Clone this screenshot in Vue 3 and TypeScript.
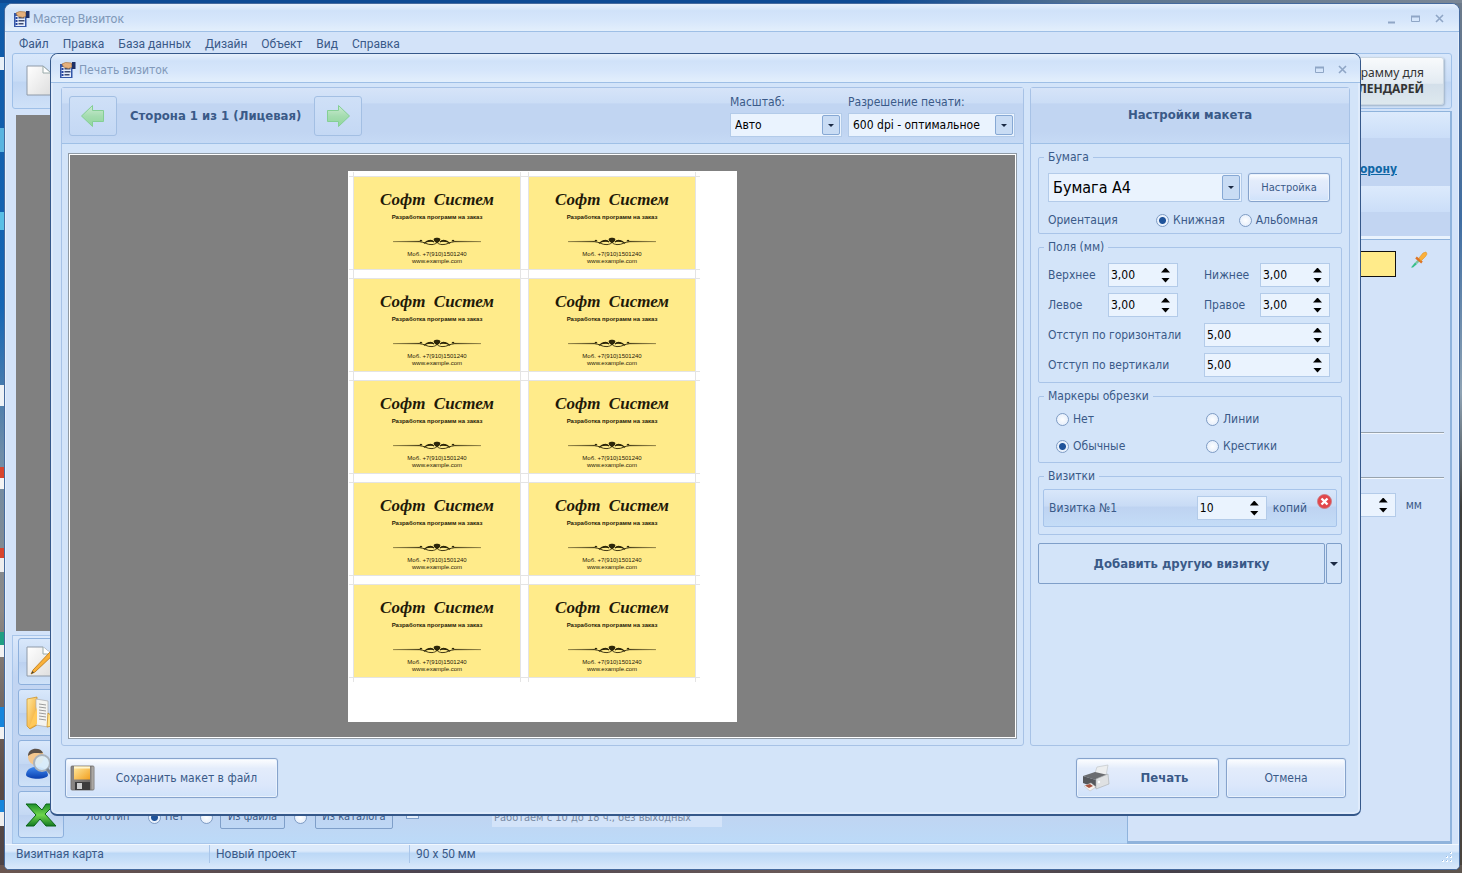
<script setup lang="ts">
import { ref } from 'vue'

interface Marker { id: string; label: string }

const menu: string[] = ['Файл', 'Правка', 'База данных', 'Дизайн', 'Объект', 'Вид', 'Справка']
const markers: Marker[] = [
  { id: 'none', label: 'Нет' },
  { id: 'lines', label: 'Линии' },
  { id: 'plain', label: 'Обычные' },
  { id: 'cross', label: 'Крестики' },
]
const scale = ref('Авто')
const dpi = ref('600 dpi - оптимальное')
const paper = ref('Бумага А4')
const orientation = ref('portrait')
const marker = ref('plain')
const logo = ref('none')
const copies = ref('10')
const top = ref('3,00')
const bottom = ref('3,00')
const left = ref('3,00')
const right = ref('3,00')
const gapX = ref('5,00')
const gapY = ref('5,00')
const side = ref('')
const hours = ref('Работаем с 10 до 18 ч., без выходных')
</script>

<template>
  <div class="desktop">
    <svg width="0" height="0" class="defs" aria-hidden="true">
      <defs>
        <linearGradient id="gGreen" x1="0" y1="0" x2="0" y2="1">
          <stop offset="0" stop-color="#cdebd3" /><stop offset="0.5" stop-color="#a5dcb0" /><stop offset="1" stop-color="#8fd79b" />
        </linearGradient>
        <linearGradient id="gPage" x1="0" y1="0" x2="1" y2="1">
          <stop offset="0" stop-color="#ffffff" /><stop offset="1" stop-color="#dedede" />
        </linearGradient>
        <linearGradient id="gGold" x1="0" y1="0" x2="1" y2="1">
          <stop offset="0" stop-color="#ffe9a0" /><stop offset="1" stop-color="#f2a020" />
        </linearGradient>
        <linearGradient id="gSteel" x1="0" y1="0" x2="1" y2="0">
          <stop offset="0" stop-color="#8d8986" /><stop offset="0.8" stop-color="#6c6865" /><stop offset="1" stop-color="#c9c6c2" />
        </linearGradient>
        <linearGradient id="gXl" x1="0" y1="0" x2="0" y2="1">
          <stop offset="0" stop-color="#1f8f2c" /><stop offset="0.5" stop-color="#6fd64c" /><stop offset="1" stop-color="#157a22" />
        </linearGradient>
        <linearGradient id="gMan" x1="0" y1="0" x2="0" y2="1">
          <stop offset="0" stop-color="#3f8af0" /><stop offset="1" stop-color="#0a3fae" />
        </linearGradient>
        <symbol id="appIcon" viewBox="0 0 16 16">
          <rect x="0.500" y="2" width="12.500" height="14" fill="#3457a8" />
          <rect x="2" y="5" width="9.500" height="10" fill="#e6eefc" />
          <rect x="2" y="6" width="2" height="2" fill="#2443a0" /><rect x="5" y="6" width="6" height="1.500" fill="#3c4a70" />
          <rect x="2" y="9" width="2" height="2" fill="#2443a0" /><rect x="5" y="9" width="6" height="1.500" fill="#3c4a70" />
          <rect x="2" y="12" width="2" height="2" fill="#2443a0" /><rect x="5" y="12" width="5" height="1.500" fill="#3c4a70" />
          <path d="M2.500 2 L6 0.500 L12 1 L12.500 5 L9 6.500 L4 5 Z" fill="#e5b07c" stroke="#a8743f" stroke-width="0.7" />
          <rect x="12.500" y="0" width="3.500" height="7" fill="#1c2f66" />
        </symbol>
        <symbol id="ornament" viewBox="0 0 88 10">
          <path d="M0 4.6 L26 4.2 L26 5 Z M88 4.6 L62 4.2 L62 5 Z" fill="#2c2609" stroke="#2c2609" stroke-width="0.3" />
          <path d="M26 4.6 C32 5 34 8 39 7.6 C43 7.2 44 5.4 44 5.4 C44 5.4 45 7.2 49 7.6 C54 8 56 5 62 4.6" fill="none" stroke="#2c2609" stroke-width="0.9" />
          <path d="M29 4.2 C28 2.6 26.6 3.6 27.4 4.6 M59 4.2 C60 2.6 61.4 3.6 60.6 4.6 M31 6.4 C34 3.6 37 2.4 41 5 M57 6.4 C54 3.6 51 2.4 47 5" fill="none" stroke="#2c2609" stroke-width="1.1" />
          <path d="M33 5.2 C36 1.8 39 2 41 5 C38 4.4 36 4.6 33 5.2 Z M55 5.2 C52 1.8 49 2 47 5 C50 4.4 52 4.6 55 5.2 Z" fill="#2c2609" />
          <path d="M44 6.200 C41 5 40 2.600 41 1.6 C42 0.6 46 0.6 47 1.6 C48 2.6 47 5 44 6.200 Z" fill="#2c2609" />
        </symbol>
      </defs>
    </svg>

    <div class="app">
      <header class="titlebar">
        <svg class="ico16"><use href="#appIcon" /></svg>
        <span class="title">Мастер Визиток</span>
        <div class="winbtns">
          <button type="button" aria-label="Свернуть"><svg width="10" height="10"><path d="M1 8.5H8" stroke="#8fa6c6" stroke-width="2" /></svg></button>
          <button type="button" aria-label="Развернуть"><svg width="10" height="10"><path d="M0.5 3V7.500H8.500V3" fill="none" stroke="#8fa6c6" /><path d="M0 2.500H9" stroke="#8fa6c6" stroke-width="2" /></svg></button>
          <button type="button" aria-label="Закрыть"><svg width="10" height="10"><path d="M1 1L8 8M8 1L1 8" stroke="#8fa6c6" stroke-width="1.600" /></svg></button>
        </div>
      </header>
      <nav class="menu">
        <a v-for="m in menu" :key="m" href="#">{{ m }}</a>
      </nav>
      <div class="toolbar">
        <svg width="28" height="32" viewBox="0 0 28 32"><path d="M1 1H17L25 8V30H1Z" fill="url(#gPage)" stroke="#8f9aa8" /><path d="M17 1V8H25Z" fill="#fff" stroke="#9aa" /></svg>
        <button type="button" class="promo"><span>Скачать программу для</span><b>КАЛЕНДАРЕЙ</b></button>
      </div>
      <div class="body">
        <section class="work">
          <div class="canvas"></div>
          <div class="tools">
            <div class="toolcol">
              <button type="button" aria-label="Изменить">
                <svg width="30" height="34" viewBox="0 0 30 34"><path d="M2 2H18L27 9V31H2Z" fill="url(#gPage)" stroke="#8f9aa8" /><path d="M18 2V9H27" fill="#fff" stroke="#9aa" /><path d="M6 29L8 25L25 7L28 10L10 27Z" fill="#fab13a" stroke="#b87410" stroke-width="0.8" /><path d="M6 29L7.500 26L9 27.500Z" fill="#443" /></svg>
              </button>
              <button type="button" aria-label="Папка">
                <svg width="30" height="34" viewBox="0 0 30 34"><path d="M2 3L12 1V29L5 33L2 30Z" fill="url(#gGold)" stroke="#c98d20" stroke-width="0.7" /><path d="M11 3L23 5V31L11 29Z" fill="#f4f4f1" stroke="#aaa" stroke-width="0.7" /><path d="M14 8L21 9M14 11L21 12M14 14L21 15M14 17L21 18M14 20L21 21M14 23L21 24" stroke="#9b9b9b" stroke-width="1" /><path d="M4 32L12 11V28Z" fill="#ffc95a" /><path d="M23 17L27 20V30L22 31Z" fill="#ffe28a" stroke="#c98d20" stroke-width="0.7" /></svg>
              </button>
              <button type="button" aria-label="Поиск">
                <svg width="30" height="34" viewBox="0 0 30 34"><circle cx="11" cy="10" r="8" fill="#f3c78f" /><path d="M3 9C3 0 16 0 18 6C13 7 9 4 3 9Z" fill="#5b5149" /><path d="M1 28C1 17 22 17 23 28C22 33 3 33 1 28Z" fill="url(#gMan)" /><circle cx="17" cy="16" r="8" fill="#dceefb" fill-opacity="0.9" stroke="#a9b3bd" stroke-width="2" /><path d="M22 22L28 29" stroke="#7d8790" stroke-width="3" /></svg>
              </button>
              <button type="button" aria-label="Excel">
                <svg width="32" height="26" viewBox="0 0 32 26"><path d="M1 2H11L17 8L21 2H30L20 12L31 24H21L15 17L9 24H1L11 13Z" fill="url(#gXl)" stroke="#0b6418" /></svg>
              </button>
            </div>
            <div class="logorow">
              <span class="lbl">Логотип</span>
              <label class="radio r1"><input v-model="logo" type="radio" name="logo" value="none" />Нет</label>
              <input v-model="logo" class="r2" type="radio" name="logo" value="file" aria-label="Из файла" />
              <button type="button" class="flat b1">Из файла</button>
              <input v-model="logo" class="r3" type="radio" name="logo" value="catalog" aria-label="Из каталога" />
              <button type="button" class="flat b2">Из каталога</button>
              <label class="check"><input type="checkbox" />Время</label>
              <input v-model="hours" class="hours" type="text" aria-label="Часы работы" />
            </div>
          </div>
        </section>
        <aside class="side">
          <div class="sidehead h1"><a href="#">Добавить сторону</a></div>
          <div class="sidehead h2"></div>
          <div class="sidebody">
            <div class="color">
              <button type="button" class="swatch" aria-label="Цвет фона"></button>
              <svg width="18" height="18" viewBox="0 0 18 18"><path d="M1 16.500L5 11.500L7 13L3 16.500Z" fill="#36c08a" /><path d="M5 11.500L8 8.500L10 10L7 13Z" fill="#7fc4a0" /><path d="M6 6.500L12 11.500" stroke="#dd7426" stroke-width="2.400" /><path d="M9 7L13 2L16 1L17 3L15.500 5.500L11 10Z" fill="#fbb03a" stroke="#e09326" stroke-width="0.600" /></svg>
            </div>
            <hr class="hr1" />
            <hr class="hr2" />
            <div class="size">
              <span class="spin"><input v-model="side" type="text" aria-label="Размер" /><span class="ud"><button type="button" aria-label="Больше"></button><button type="button" class="dn" aria-label="Меньше"></button></span></span>
              <span>мм</span>
            </div>
          </div>
        </aside>
      </div>
      <footer class="status">
        <span>Визитная карта</span><span>Новый проект</span><span>90 x 50 мм</span>
        <svg width="12" height="12" viewBox="0 0 12 12"><path d="M9 1h2v2H9zM5 5h2v2H5zM9 5h2v2H9zM1 9h2v2H1zM5 9h2v2H5zM9 9h2v2H9z" fill="#fff" /><path d="M9 1h1v1H9zM5 5h1v1H5zM9 5h1v1H9zM1 9h1v1H1zM5 9h1v1H5zM9 9h1v1H9z" fill="#8fb3dd" /></svg>
      </footer>
    </div>

    <div class="dialog" role="dialog" aria-label="Печать визиток">
      <header class="titlebar">
        <svg class="ico16"><use href="#appIcon" /></svg>
        <span class="title">Печать визиток</span>
        <div class="winbtns">
          <button type="button" aria-label="Развернуть"><svg width="10" height="10"><path d="M0.5 3V7.500H8.500V3" fill="none" stroke="#8fa6c6" /><path d="M0 2.500H9" stroke="#8fa6c6" stroke-width="2" /></svg></button>
          <button type="button" aria-label="Закрыть"><svg width="10" height="10"><path d="M1 1L8 8M8 1L1 8" stroke="#8fa6c6" stroke-width="1.600" /></svg></button>
        </div>
      </header>
      <div class="main">
        <section class="panel view">
          <div class="head bar">
            <button type="button" class="nav" aria-label="Назад"><svg width="26" height="24" viewBox="0 0 26 24"><path d="M1.500 12L12.500 1.500V6.500H23.500V17.500H12.500V22.500Z" fill="url(#gGreen)" stroke="#84cf95" /></svg></button>
            <strong class="pagename">Сторона 1 из 1 (Лицевая)</strong>
            <button type="button" class="nav" aria-label="Вперёд"><svg width="26" height="24" viewBox="0 0 26 24"><path d="M24.500 12L13.500 1.500V6.500H2.500V17.500H13.500V22.500Z" fill="url(#gGreen)" stroke="#84cf95" /></svg></button>
            <label class="field scale">Масштаб:
              <span class="combo"><select v-model="scale"><option>Авто</option></select><i></i></span>
            </label>
            <label class="field dpi">Разрешение печати:
              <span class="combo"><select v-model="dpi"><option>600 dpi - оптимальное</option></select><i></i></span>
            </label>
          </div>
          <div class="preview">
            <div class="sheet">
              <div v-for="n in 10" :key="n" class="card">
                <div class="name">Софт&nbsp; Систем</div>
                <div class="slogan">Разработка программ на заказ</div>
                <svg width="88" height="10"><use href="#ornament" /></svg>
                <div class="contact">Моб. +7(910)1501240<br />www.example.com</div>
              </div>
            </div>
          </div>
        </section>

        <aside class="panel settings">
          <div class="head sethead">Настройки макета</div>
          <form class="groups" @submit.prevent>
            <fieldset class="paper">
              <legend>Бумага</legend>
              <div class="row">
                <span class="combo big"><select v-model="paper" aria-label="Бумага"><option>Бумага А4</option></select><i></i></span>
                <button type="button" class="btn setup">Настройка</button>
              </div>
              <div class="orient">
                <span>Ориентация</span>
                <label class="radio"><input v-model="orientation" type="radio" name="orient" value="portrait" />Книжная</label>
                <label class="radio"><input v-model="orientation" type="radio" name="orient" value="landscape" />Альбомная</label>
              </div>
            </fieldset>

            <fieldset class="margins">
              <legend>Поля (мм)</legend>
              <div class="mgrid">
                <label for="mTop">Верхнее</label>
                <span class="spin"><input id="mTop" v-model="top" type="text" /><span class="ud"><button type="button" aria-label="Больше"></button><button type="button" class="dn" aria-label="Меньше"></button></span></span>
                <label for="mBottom" class="c4">Нижнее</label>
                <span class="spin"><input id="mBottom" v-model="bottom" type="text" /><span class="ud"><button type="button" aria-label="Больше"></button><button type="button" class="dn" aria-label="Меньше"></button></span></span>
                <label for="mLeft">Левое</label>
                <span class="spin"><input id="mLeft" v-model="left" type="text" /><span class="ud"><button type="button" aria-label="Больше"></button><button type="button" class="dn" aria-label="Меньше"></button></span></span>
                <label for="mRight" class="c4">Правое</label>
                <span class="spin"><input id="mRight" v-model="right" type="text" /><span class="ud"><button type="button" aria-label="Больше"></button><button type="button" class="dn" aria-label="Меньше"></button></span></span>
                <label for="gX" class="wide">Отступ по горизонтали</label>
                <span class="spin long"><input id="gX" v-model="gapX" type="text" /><span class="ud"><button type="button" aria-label="Больше"></button><button type="button" class="dn" aria-label="Меньше"></button></span></span>
                <label for="gY" class="wide">Отступ по вертикали</label>
                <span class="spin long"><input id="gY" v-model="gapY" type="text" /><span class="ud"><button type="button" aria-label="Больше"></button><button type="button" class="dn" aria-label="Меньше"></button></span></span>
              </div>
            </fieldset>

            <fieldset class="marks">
              <legend>Маркеры обрезки</legend>
              <div class="kgrid">
                <label v-for="k in markers" :key="k.id" class="radio"><input v-model="marker" type="radio" name="marker" :value="k.id" />{{ k.label }}</label>
              </div>
            </fieldset>

            <fieldset class="cards">
              <legend>Визитки</legend>
              <div class="item">
                <label for="copies">Визитка №1</label>
                <span class="spin"><input id="copies" v-model="copies" type="text" /><span class="ud"><button type="button" aria-label="Больше"></button><button type="button" class="dn" aria-label="Меньше"></button></span></span>
                <span class="unit">копий</span>
                <button type="button" class="del" aria-label="Удалить"><svg width="15" height="15" viewBox="0 0 15 15"><circle cx="7.500" cy="7.500" r="7" fill="#e2474b" stroke="#c9797f" stroke-width="0.8" /><path d="M4.500 4.500L10.500 10.500M10.500 4.500L4.500 10.500" stroke="#fff" stroke-width="2.400" /></svg></button>
              </div>
            </fieldset>

            <div class="add">
              <button type="button" class="flat addmain">Добавить другую визитку</button>
              <button type="button" class="flat addmore" aria-label="Ещё"><i></i></button>
            </div>
          </form>
        </aside>
      </div>
      <footer class="actions">
        <button type="button" class="btn save">
          <svg width="26" height="26" viewBox="0 0 26 26"><rect x="1" y="1" width="23" height="24" rx="1" fill="url(#gSteel)" stroke="#6d6a67" stroke-width="0.8" /><rect x="4" y="1.500" width="16" height="13" fill="url(#gGold)" /><rect x="4" y="1.500" width="16" height="2" fill="#fff6cf" /><rect x="5" y="17" width="15" height="8" fill="#3d3c3c" /><rect x="7" y="18" width="5" height="6" fill="#cfcfcf" /></svg>
          <span>Сохранить макет в файл</span>
        </button>
        <button type="button" class="btn print">
          <svg width="30" height="28" viewBox="0 0 30 28"><path d="M16 3L27 1L25 12L13 12Z" fill="#eceeef" stroke="#c3c7ca" stroke-width="0.7" /><path d="M2 12L14 8L27 11L15 16Z" fill="#6a6c70" /><path d="M2 12L15 16V24L2 19Z" fill="#56585c" /><path d="M15 15L27 10L28 20L15 25Z" fill="#dfe1e3" stroke="#a8acaf" stroke-width="0.6" /><path d="M3 22L10 19L15 23L9 27Z" fill="#f6f2ef" stroke="#b9b9b9" stroke-width="0.5" /><path d="M4 21.500L9 20L12 22L8 24Z" fill="#a8533e" /><circle cx="18" cy="18" r="1.200" fill="#fff" /></svg>
          <b>Печать</b>
        </button>
        <button type="button" class="btn cancel">Отмена</button>
      </footer>
    </div>
  </div>
</template>

<style>
html, body { margin: 0; height: 100%; overflow: hidden; }
</style>

<style scoped>
* { box-sizing: border-box; }
.desktop {
  position: relative;
  min-height: 100vh;
  display: flex;
  padding: 3px 2px 3px 4px;
  font: 12px/16px "DejaVu Sans Condensed", "DejaVu Sans", sans-serif;
  color: #3a5a88;
  background:
    linear-gradient(90deg, #0d4a94 0 60%, #5b7590 75%, #7b8795) 0 0 / 100% 3px no-repeat,
    linear-gradient(90deg, #6a5650, #4c4450 30%, #6a5a58 55%, #45404a 80%, #5d554f) 0 100% / 100% 8px no-repeat,
    linear-gradient(transparent 57px, #e8f0f8 57px 70px, transparent 70px 128px, #5ab4e0 128px 152px, transparent 152px 212px, #59bfe6 212px 230px, transparent 230px 385px, #eef2f6 385px 406px, transparent 406px 467px, #d8452e 467px 478px, #f4f4f4 478px 489px, transparent 489px 548px, #d8452e 548px 558px, #eee 558px 572px, transparent 572px 632px, #1f9f83 632px 645px, #f2f2f2 645px 657px, transparent 657px 707px, #1685dc 707px 727px, #f2f2f2 727px 739px, transparent 739px 800px, #1685dc 800px 812px, #eee 812px 826px, transparent 826px) 0 0 / 4px 100% no-repeat,
    linear-gradient(#0f5aa8, #1566b5 35%, #6f8da8 52%, #8d8985 70%, #5b4a44 90%, #4c4347) 0 0 / 50% 100% no-repeat,
    linear-gradient(#6e7b8a, #3f6ea3 25%, #8fa3b4 45%, #3c3d3b 58%, #4a443d) 100% 0 / 50% 100% no-repeat;
}
.defs { position: absolute; }
button, input, select { font: inherit; color: inherit; margin: 0; }
button { padding: 0; border: 0; background: none; }
a { color: inherit; text-decoration: none; }
svg { display: block; flex: none; }

.app {
  flex: 1;
  display: flex;
  flex-direction: column;
  border: 1px solid #456a9e;
  border-radius: 8px 8px 5px 5px;
  background: #d3e3f9;
  box-shadow: inset 0 0 0 1px #e6f0fc;
  overflow: hidden;
}
.titlebar {
  display: flex;
  align-items: center;
  height: 28px;
  padding: 0 12px 0 8px;
  border-bottom: 1px solid #9ebfe6;
  background: linear-gradient(#e6f0fc 0, #d0e2f9 25%, #d6e6fb 60%, #e3effc);
  color: #8199b9;
}
.ico16 { width: 17px; height: 16px; }
.title { margin-left: 3px; flex: 1; }
.winbtns { display: flex; gap: 13px; }
.winbtns svg { width: 10px; height: 10px; }
.menu {
  display: flex;
  gap: 14px;
  height: 21px;
  align-items: center;
  padding: 2px 14px 0;
}
.menu, .app > .titlebar, .status { font-family: Roboto, "Noto Sans", sans-serif; }
.app > .titlebar { padding-top: 2px; }
.app .winbtns { gap: 14px; padding-right: 2px; }
.toolbar {
  display: flex;
  justify-content: space-between;
  align-items: center;
  height: 56px;
  margin: 0 7px;
  padding: 0 7px 0 13px;
  border: 1px solid #9fc0e8;
  border-radius: 3px;
  background: linear-gradient(#d9e8fb, #c8dcf6 50%, #bfd5f3 52%, #cfe1f8);
}
.promo {
  display: flex;
  flex-direction: column;
  align-items: flex-end;
  padding: 7px 19px 7px 30px;
  border: 1px solid #cbd7e3;
  border-radius: 3px;
  background: linear-gradient(#f8fafc, #e3ebf2 55%, #d3dfea 57%, #dde8ee);
  color: #333;
  box-shadow: 1px 1px 2px #9fb3c8;
  font-family: "Noto Sans", sans-serif;
}
.body { flex: 1; display: flex; padding: 2px 7px 0; min-height: 0; }
.work { flex: 1; display: flex; flex-direction: column; min-width: 0; }
.canvas { flex: 1; margin: 4px 6px 4px 4px; background: #808080; }
.tools {
  display: flex;
  height: 209px;
  padding: 2px 5px;
  border: 1px solid #a9c6ea;
  border-right: 0;
  background: linear-gradient(#dbe9fb, #c2d5f2 20%, #c0d4f1 85%, #bcdaf8);
}
.toolcol { display: flex; flex-direction: column; gap: 4px; width: 46px; flex: none; }
.toolcol button {
  flex: none;
  display: flex;
  align-items: center;
  height: 47px;
  padding-left: 6px;
  border: 1px solid #8db0dc;
  border-radius: 3px;
  background: linear-gradient(#d9e8fb, #c4d8f3 50%, #bcd1f0 52%, #cfe2f8);
}
.logorow { display: flex; align-items: center; height: 24px; margin-top: 167px; padding-left: 22px; font-size: 11px; }
.lbl { width: 62px; }
.r1 { width: 52px; }
.flat { border: 1px solid #7f9fc9; border-radius: 2px; }
.b1 { width: 65px; height: 24px; margin: 0 9px 0 7px; }
.b2 { width: 78px; height: 24px; margin-left: 8px; }
.check { display: flex; align-items: flex-start; gap: 5px; margin-left: 13px; height: 24px; width: 86px; line-height: 12px; }
.check input { appearance: none; flex: none; width: 13px; height: 14px; border: 1px solid #7f9fc9; background: #e4eefb; }
.hours { width: 230px; height: 20px; padding: 0 2px; border: 0; background: #d3e3f9; color: #7889a3; }

.side { width: 325px; flex: none; display: flex; flex-direction: column; border: 1px solid #8fb3dc; border-right-width: 2px; border-bottom-width: 3px; }
.sidehead { background: linear-gradient(#dceafc, #cbdef8) 0 0 / 100% 26px no-repeat, #c2d5f2; }
.h1 { height: 74px; padding: 49px 53px 0 0; text-align: right; color: #0e66a5; font-weight: bold; }
.h1 a { text-decoration: underline; }
.h2 { height: 51px; }
.sidebody { flex: 1; border-top: 1px solid #8fb3dc; box-shadow: 0 -3px #eaf3fd; margin-top: 2px; padding: 11px 6px; background: #d3e3f9; }
.color { display: flex; justify-content: flex-end; gap: 14px; padding-right: 16px; }
.swatch { width: 120px; height: 26px; border: 1px solid #111; background: #ffeb8a; }
.sidebody hr { height: 2px; border: 0; border-top: 1px solid #98a3ad; background: #f2f7fd; margin: 0; }
.sidebody .hr1 { margin-top: 155px; }
.sidebody .hr2 { margin-top: 43px; }
.size { display: flex; justify-content: flex-end; align-items: center; gap: 10px; margin-top: 14px; padding-right: 22px; }

.status {
  display: flex;
  align-items: center;
  height: 25px;
  padding: 0 6px 6px 11px;
  border-top: 1px solid #f2f8fe;
  background: linear-gradient(#dceafb 0 25%, #bcd8f6 35%, #c6def8 60%, #dbe9fb);
}
.status span { width: 200px; border-right: 1px solid #a9c6ea; line-height: 18px; padding-left: 6px; }
.status span:first-child { width: 194px; padding: 0; }
.status span:nth-child(3) { flex: 1; border: 0; }
.status svg { align-self: flex-end; }

.dialog {
  position: absolute;
  inset: 53px 101px 57px 50px;
  display: flex;
  flex-direction: column;
  border: 1px solid #35588a;
  border-bottom-width: 2px;
  border-radius: 8px 8px 7px 7px;
  background: #d3e4f9;
  box-shadow: inset 0 0 0 2px #dfebfb;
}
.dialog .titlebar { height: 29px; flex: none; border-radius: 7px 7px 0 0; padding-top: 3px; }
.main { flex: 1; display: flex; gap: 6px; padding: 4px 10px 0; min-height: 0; }
.panel { border: 1px solid #a7c2e6; border-radius: 3px; display: flex; flex-direction: column; background: #d3e4f9; }
.view { flex: 1; min-width: 0; }
.head { border-bottom: 1px solid #9fc0e6; background: linear-gradient(#d6e4f8 0, #cbddf6 27%, #c1d5f2 29%, #c1d5f2 80%, #c6daf5); }
.bar { display: flex; align-items: center; height: 56px; padding: 0 8px 0 7px; }
.nav {
  display: flex;
  align-items: center;
  justify-content: center;
  width: 48px;
  height: 40px;
  border: 1px solid #a3bfe3;
  border-radius: 3px;
  background: linear-gradient(#cfe0f7, #c4d8f4);
}
.pagename { font: bold 13px/16px "DejaVu Sans Condensed", "DejaVu Sans", sans-serif; margin: 0 13px; }
.field { display: flex; flex-direction: column; gap: 3px; }
.scale { margin-left: auto; width: 112px; }
.dpi { margin-left: 6px; width: 167px; }
.combo { display: flex; position: relative; height: 24px; border: 1px solid #b3cbe9; background: #eaf3fe; }
.combo select { flex: 1; min-width: 0; appearance: none; border: 0; background: none; color: #000; padding: 0 22px 0 4px; }
.combo i {
  position: absolute;
  right: 1px;
  top: 1px;
  bottom: 1px;
  width: 18px;
  display: grid;
  place-items: center;
  border: 1px solid #86a8d4;
  border-radius: 2px;
  background: #c9dcf4;
  pointer-events: none;
}
.combo i::after, .addmore i { content: ""; display: block; border: 3px solid transparent; border-top-color: #1b2a44; border-bottom: 0; }
.preview {
  flex: 1;
  display: flex;
  align-items: center;
  justify-content: center;
  margin: 9px 6px 6px;
  border: 1px solid #8f9aa5;
  box-shadow: inset 0 0 0 1px #fff;
  background: #808080;
}
.sheet {
  display: grid;
  grid-template-columns: 166px 166px;
  grid-auto-rows: 92px;
  gap: 10px 9px;
  width: 389px;
  height: 551px;
  padding: 6px;
  background: #fff;
  isolation: isolate;
}
.card {
  position: relative;
  display: flex;
  flex-direction: column;
  align-items: center;
  background: #ffeb8a;
  color: #1f1a08;
  font-family: "Liberation Sans", sans-serif;
  padding-top: 10px;
}
/* crop marks reaching past the card edges */
.card::before, .card::after { content: ""; position: absolute; z-index: -1; border: 0 solid #e4e4e4; }
.card::before { inset: -1px -5px; border-width: 1px 0; }
.card::after { inset: -5px -1px; border-width: 0 1px; }
.name { font: italic bold 17px/26px "Liberation Serif", serif; }
.slogan { font-size: 6px; line-height: 8px; font-weight: bold; }
.card svg { margin-top: 16px; }
.contact { font-size: 6px; line-height: 7px; margin-top: 4px; text-align: center; }

.settings { width: 320px; flex: none; }
.sethead { height: 56px; padding-bottom: 2px; display: grid; place-items: center; font-size: 13px; font-weight: bold; }
.groups { padding: 6px 7px; display: flex; flex-direction: column; gap: 6px; }
fieldset { min-width: 0; margin: 0; border: 1px solid #a9c4e8; border-radius: 2px; padding: 9px 11px 5px 9px; }
legend { padding: 0 4px; margin-left: -4px; line-height: 14px; }
.row { display: flex; gap: 6px; }
.big { flex: 1; height: 29px; font-size: 16px; }
.btn {
  border: 1px solid #86a3cc;
  border-radius: 3px;
  background: linear-gradient(#fdfeff 0, #e3ecfb 25%, #dbe7fb 70%, #cfe2fa);
  box-shadow: inset 0 0 0 1px #e9f2fd, 0 0 1px #a9bfdd;
}
.setup { width: 82px; font-size: 11px; }
.orient { display: flex; align-items: center; height: 16px; margin-top: 10px; }
.orient span { width: 108px; }
.orient .radio + .radio { margin-left: 14px; }
.radio { display: flex; align-items: center; gap: 4px; white-space: nowrap; }
input[type="radio"] {
  appearance: none;
  flex: none;
  width: 13px;
  height: 13px;
  border: 1px solid #7f9cc4;
  border-radius: 50%;
  background: radial-gradient(#fdfeff, #dfeafa);
}
input[type="radio"]:checked { background: radial-gradient(circle, #1f539a 0 3px, #e9f1fc 4px); }
.mgrid { display: grid; grid-template-columns: 60px 70px 1fr 56px 70px; grid-auto-rows: 24px; row-gap: 6px; align-items: center; }
.c4 { grid-column: 4; }
.wide { grid-column: 1 / 4; }
.long { grid-column: 4 / 6; }
.spin { display: flex; height: 24px; min-width: 0; border: 1px solid #b3cbe9; background: #eaf3fe; }
.spin input { flex: 1; width: 20px; min-width: 0; border: 0; padding: 0 2px; background: none; color: #000; }
.ud { display: flex; flex-direction: column; justify-content: center; gap: 5px; width: 20px; }
.ud button { width: 9px; height: 5px; margin-left: 4px; background: #000; clip-path: polygon(50% 0, 100% 100%, 0 100%); }
.ud .dn { clip-path: polygon(0 0, 100% 0, 50% 100%); }
.size .spin { width: 80px; }
.marks { padding: 8px 9px 8px 17px; }
.marks legend { margin-left: -12px; }
.kgrid { display: grid; grid-template-columns: 150px 1fr; row-gap: 11px; }
.cards { padding: 6px 4px 7px; }
.cards legend { margin-left: 1px; }
.item {
  display: flex;
  align-items: center;
  height: 38px;
  padding: 0 4px 0 5px;
  border: 1px solid #a7c4ea;
  border-radius: 2px;
  background: linear-gradient(#d9e7fa, #c8dbf5 45%, #bed3f1 47%, #c4dcf7);
}
.item label { flex: 1; }
.item .spin { width: 70px; }
.unit { margin-left: 6px; }
.del { align-self: flex-start; margin: 4px 0 0 10px; }
.add { display: flex; gap: 1px; height: 41px; margin-top: 2px; }
.addmain { flex: 1; font-size: 13px; font-weight: bold; }
.addmore { width: 16px; display: grid; place-items: center; }
.addmore i { border-width: 4px 4px 0; }
.actions { display: flex; align-items: center; height: 68px; padding: 0 14px 4px; }
.actions .btn { height: 40px; display: flex; align-items: center; justify-content: center; }
.save { width: 213px; }
.save span { flex: 1; }
.save svg, .print svg { margin-left: 4px; }
.print { width: 143px; margin-left: auto; }
.print b { flex: 1; font-size: 13px; }
.cancel { width: 120px; margin-left: 7px; }
</style>
